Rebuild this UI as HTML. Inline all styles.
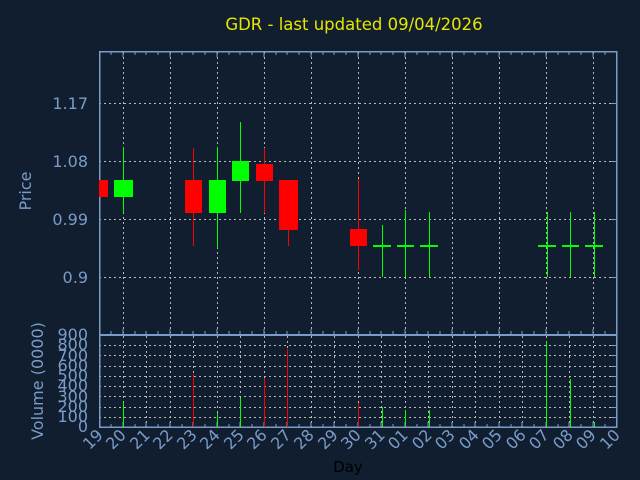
<!DOCTYPE html>
<html><head><meta charset="utf-8"><style>
html,body{margin:0;padding:0;background:#111e2f;}
svg{display:block;font-family:"DejaVu Sans","Liberation Sans",sans-serif;}
</style></head><body>
<svg width="640" height="480" viewBox="0 0 640 480" xmlns="http://www.w3.org/2000/svg" shape-rendering="crispEdges">
<rect width="640" height="480" fill="#111e2f"/>
<text x="354" y="30" fill="#e6e600" font-size="16.5" text-anchor="middle">GDR - last updated 09/04/2026</text>
<g stroke="#b8b8b8" stroke-width="1" stroke-dasharray="2,3" fill="none">
<path d="M99 103.5H617M99 161.5H617M99 219.5H617M99 277.5H617"/>
<path d="M123.5 52V333M170.5 52V333M217.5 52V333M264.5 52V333M311.5 52V333M358.5 52V333M405.5 52V333M452.5 52V333M499.5 52V333M546.5 52V333M593.5 52V333"/>
<path d="M99 345.5H617M99 355.5H617M99 366.5H617M99 376.5H617M99 386.5H617M99 396.5H617M99 407.5H617M99 417.5H617"/>
<path d="M123.5 336V427M146.5 336V427M170.5 336V427M193.5 336V427M217.5 336V427M240.5 336V427M264.5 336V427M287.5 336V427M311.5 336V427M334.5 336V427M358.5 336V427M381.5 336V427M405.5 336V427M428.5 336V427M452.5 336V427M475.5 336V427M499.5 336V427M522.5 336V427M546.5 336V427M569.5 336V427M593.5 336V427"/>
</g>
<g stroke="#7a9cc8" stroke-width="1.5" fill="none">
<rect x="99.5" y="51.5" width="517" height="283"/>
<rect x="99.5" y="335" width="517" height="92"/>
</g>
<g stroke="#7a9cc8" stroke-width="1" fill="none">
<path d="M111 52v3M123 52v5M135 52v3M146 52v3M158 52v3M170 52v5M182 52v3M193 52v3M205 52v3M217 52v5M229 52v3M240 52v3M252 52v3M264 52v5M276 52v3M287 52v3M299 52v3M311 52v5M323 52v3M334 52v3M346 52v3M358 52v5M370 52v3M381 52v3M393 52v3M405 52v5M417 52v3M428 52v3M440 52v3M452 52v5M464 52v3M475 52v3M487 52v3M499 52v5M511 52v3M522 52v3M534 52v3M546 52v5M558 52v3M569 52v3M581 52v3M593 52v5M605 52v3"/>
<path d="M111 334v-3M123 334v-5M135 334v-3M146 334v-3M158 334v-3M170 334v-5M182 334v-3M193 334v-3M205 334v-3M217 334v-5M229 334v-3M240 334v-3M252 334v-3M264 334v-5M276 334v-3M287 334v-3M299 334v-3M311 334v-5M323 334v-3M334 334v-3M346 334v-3M358 334v-5M370 334v-3M381 334v-3M393 334v-3M405 334v-5M417 334v-3M428 334v-3M440 334v-3M452 334v-5M464 334v-3M475 334v-3M487 334v-3M499 334v-5M511 334v-3M522 334v-3M534 334v-3M546 334v-5M558 334v-3M569 334v-3M581 334v-3M593 334v-5M605 334v-3"/>
<path d="M111 427v-3M123 427v-5M135 427v-3M146 427v-5M158 427v-3M170 427v-5M182 427v-3M193 427v-5M205 427v-3M217 427v-5M229 427v-3M240 427v-5M252 427v-3M264 427v-5M276 427v-3M287 427v-5M299 427v-3M311 427v-5M323 427v-3M334 427v-5M346 427v-3M358 427v-5M370 427v-3M381 427v-5M393 427v-3M405 427v-5M417 427v-3M428 427v-5M440 427v-3M452 427v-5M464 427v-3M475 427v-5M487 427v-3M499 427v-5M511 427v-3M522 427v-5M534 427v-3M546 427v-5M558 427v-3M569 427v-5M581 427v-3M593 427v-5M605 427v-3"/>
<path d="M611 103.5h6M611 161.5h6M611 219.5h6M611 277.5h6M611 345.5h6M611 355.5h6M611 366.5h6M611 376.5h6M611 386.5h6M611 396.5h6M611 407.5h6M611 417.5h6"/>
</g>
<g fill="#ff0000">
<rect x="99" y="180" width="9" height="17"/>
<rect x="264" y="148" width="1" height="65"/>
<rect x="193" y="148" width="1" height="98"/>
<rect x="185" y="180" width="17" height="33"/>
<rect x="256" y="164" width="17" height="17"/>
<rect x="288" y="180" width="1" height="66"/>
<rect x="279" y="180" width="19" height="50"/>
<rect x="358" y="179" width="1" height="91"/>
<rect x="350" y="229" width="17" height="17"/>
</g>
<g fill="#00ff00">
<rect x="123" y="147" width="1" height="66"/>
<rect x="114" y="180" width="19" height="17"/>
<rect x="217" y="147" width="1" height="101"/>
<rect x="209" y="180" width="17" height="33"/>
<rect x="240" y="122" width="1" height="91"/>
<rect x="232" y="161" width="17" height="20"/>
<rect x="382" y="225" width="1" height="52"/>
<rect x="373" y="245" width="18" height="2"/>
<rect x="405" y="210" width="1" height="67"/>
<rect x="397" y="245" width="17" height="2"/>
<rect x="429" y="212" width="1" height="65"/>
<rect x="420" y="245" width="18" height="2"/>
<rect x="547" y="212" width="1" height="65"/>
<rect x="538" y="245" width="18" height="2"/>
<rect x="570" y="212" width="1" height="65"/>
<rect x="562" y="245" width="17" height="2"/>
<rect x="594" y="212" width="1" height="65"/>
<rect x="585" y="245" width="18" height="2"/>
</g>
<g fill="#ff0000">
<rect x="193" y="374" width="1" height="53"/>
<rect x="264" y="378" width="1" height="49"/>
<rect x="287" y="349" width="1" height="78"/>
<rect x="358" y="403" width="1" height="24"/>
</g>
<g fill="#00ff00">
<rect x="123" y="402" width="1" height="25"/>
<rect x="217" y="413" width="1" height="14"/>
<rect x="240" y="398" width="1" height="29"/>
<rect x="382" y="407" width="1" height="20"/>
<rect x="405" y="410" width="1" height="17"/>
<rect x="429" y="410" width="1" height="17"/>
<rect x="546" y="341" width="1" height="86"/>
<rect x="570" y="379" width="1" height="48"/>
<rect x="594" y="422" width="1" height="5"/>
</g>
<g fill="#7a9cc8" font-size="16" text-anchor="end" shape-rendering="auto">
<text x="88" y="109">1.17</text>
<text x="88" y="167">1.08</text>
<text x="88" y="225">0.99</text>
<text x="88" y="283">0.9</text>
<text x="88" y="340">900</text>
<text x="88" y="350">800</text>
<text x="88" y="361">700</text>
<text x="88" y="371">600</text>
<text x="88" y="381">500</text>
<text x="88" y="391">400</text>
<text x="88" y="402">300</text>
<text x="88" y="412">200</text>
<text x="88" y="422">100</text>
<text x="88" y="432">0</text>
</g>
<text transform="translate(31,191) rotate(-90)" fill="#7a9cc8" font-size="16" text-anchor="middle">Price</text>
<text transform="translate(43,381) rotate(-90)" fill="#7a9cc8" font-size="16" text-anchor="middle">Volume (0000)</text>
<g fill="#7a9cc8" font-size="16" text-anchor="end">
<text transform="translate(104,436) rotate(-45)">19</text>
<text transform="translate(127,436) rotate(-45)">20</text>
<text transform="translate(151,436) rotate(-45)">21</text>
<text transform="translate(174,436) rotate(-45)">22</text>
<text transform="translate(198,436) rotate(-45)">23</text>
<text transform="translate(221,436) rotate(-45)">24</text>
<text transform="translate(245,436) rotate(-45)">25</text>
<text transform="translate(268,436) rotate(-45)">26</text>
<text transform="translate(292,436) rotate(-45)">27</text>
<text transform="translate(315,436) rotate(-45)">28</text>
<text transform="translate(339,436) rotate(-45)">29</text>
<text transform="translate(362,436) rotate(-45)">30</text>
<text transform="translate(386,436) rotate(-45)">31</text>
<text transform="translate(409,436) rotate(-45)">01</text>
<text transform="translate(433,436) rotate(-45)">02</text>
<text transform="translate(456,436) rotate(-45)">03</text>
<text transform="translate(480,436) rotate(-45)">04</text>
<text transform="translate(503,436) rotate(-45)">05</text>
<text transform="translate(527,436) rotate(-45)">06</text>
<text transform="translate(550,436) rotate(-45)">07</text>
<text transform="translate(574,436) rotate(-45)">08</text>
<text transform="translate(597,436) rotate(-45)">09</text>
<text transform="translate(621,436) rotate(-45)">10</text>
</g>
<text x="348" y="472" fill="#000000" font-size="15" text-anchor="middle">Day</text>
</svg>
</body></html>
